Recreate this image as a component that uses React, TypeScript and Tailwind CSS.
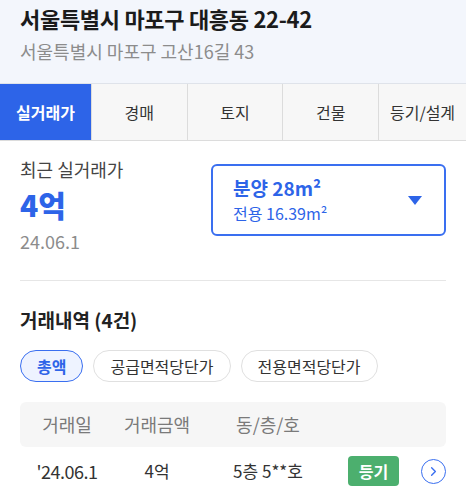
import { ChevronRight } from 'lucide-react'

const tabs = ['실거래가', '경매', '토지', '건물', '등기/설계']
const chips = ['총액', '공급면적당단가', '전용면적당단가']

export default function App() {
  const font = { fontFamily: '"Noto Sans CJK KR", "Noto Sans", sans-serif' }
  return (
    <div className="w-[466px] h-[496px] overflow-hidden bg-white" style={font}>
      {/* Header */}
      <div className="bg-[#f3f6fc] px-5 pt-[3px] h-[84px] border-b border-[#dfe3ea]">
        <h1 className="text-[22px] font-bold text-[#1b1b1b] leading-[30px] tracking-[-0.3px]">서울특별시 마포구 대흥동 22-42</h1>
        <p className="mt-[6px] text-[18px] text-[#8c8c8c] leading-[24px]">서울특별시 마포구 고산16길 43</p>
      </div>

      {/* Tabs */}
      <div className="flex h-[57px] border-b border-[#dcdcdc] bg-[#f7f7f7]">
        {tabs.map((t, i) => (
          <div
            key={t}
            className={`flex items-center justify-center text-[16px] ${
              i === 0 ? 'w-[91px] bg-[#2d64e8] text-white font-bold' : 'flex-1 text-[#333] border-l border-[#dcdcdc]'
            } ${i === 4 ? 'w-[88px] flex-none' : ''}`}
          >
            {t}
          </div>
        ))}
      </div>

      {/* Recent price */}
      <div className="mx-5 pt-[16px] pb-[27px] border-b border-[#e6e6e6] flex justify-between">
        <div>
          <div className="text-[18px] text-[#444] leading-[24px]">최근 실거래가</div>
          <div className="text-[30px] font-extrabold text-[#2d64e8] leading-[36px] mt-[5px]">4억</div>
          <div className="text-[18px] text-[#8c8c8c] leading-[24px] mt-[7px]">24.06.1</div>
        </div>
        <div className="w-[235px] h-[72px] mt-[7px] border-2 border-[#3a6ff0] rounded-[6px] flex items-center justify-between pl-[20px] pr-[22px]">
          <div>
            <div className="text-[19px] font-bold text-[#2d64e8] leading-[26px]">분양 28m²</div>
            <div className="text-[16px] text-[#2d64e8] leading-[24px]">전용 16.39m²</div>
          </div>
          <svg width="14" height="9" viewBox="0 0 14 9">
            <path d="M0 0H14L7 9Z" fill="#2d64e8" />
          </svg>
        </div>
      </div>

      {/* History */}
      <div className="px-5 pt-[26px]">
        <h2 className="text-[19px] font-bold text-[#222] leading-[26px]">거래내역 (4건)</h2>
        <div className="flex gap-[10px] mt-[17px]">
          {chips.map((c, i) => (
            <div
              key={c}
              className={`h-[32px] rounded-full flex items-center text-[16px] border ${
                i === 0
                  ? 'px-[16px] border-[#3a6ff0] bg-[#eef3ff] text-[#2d64e8] font-bold border-[1.5px]'
                  : 'px-[16px] border-[#e0e0e0] text-[#333]'
              }`}
            >
              {c}
            </div>
          ))}
        </div>

        <div className="mt-[20px] h-[45px] bg-[#f6f6f6] rounded-[6px] flex items-center text-[18px] text-[#7a7a7a]">
          <div className="w-[94px] text-center">거래일</div>
          <div className="w-[86px] text-center">거래금액</div>
          <div className="w-[136px] text-center">동/층/호</div>
        </div>
        <div className="h-[48px] flex items-center text-[17px] text-[#333]">
          <div className="w-[94px] text-center text-[18px] tracking-[-0.5px]">'24.06.1</div>
          <div className="w-[86px] text-center">4억</div>
          <div className="w-[136px] text-center">5층 5**호</div>
          <div className="ml-[12px] w-[51px] h-[30px] rounded-[4px] bg-[#4caf6e] text-white text-[16px] font-bold flex items-center justify-center">
            등기
          </div>
          <div className="ml-[22px] w-[25px] h-[25px] rounded-full border-[1.5px] border-[#3a6ff0] flex items-center justify-center">
            <ChevronRight className="w-[15px] h-[15px] text-[#3a6ff0]" strokeWidth={2.2} />
          </div>
        </div>
      </div>
    </div>
  )
}
